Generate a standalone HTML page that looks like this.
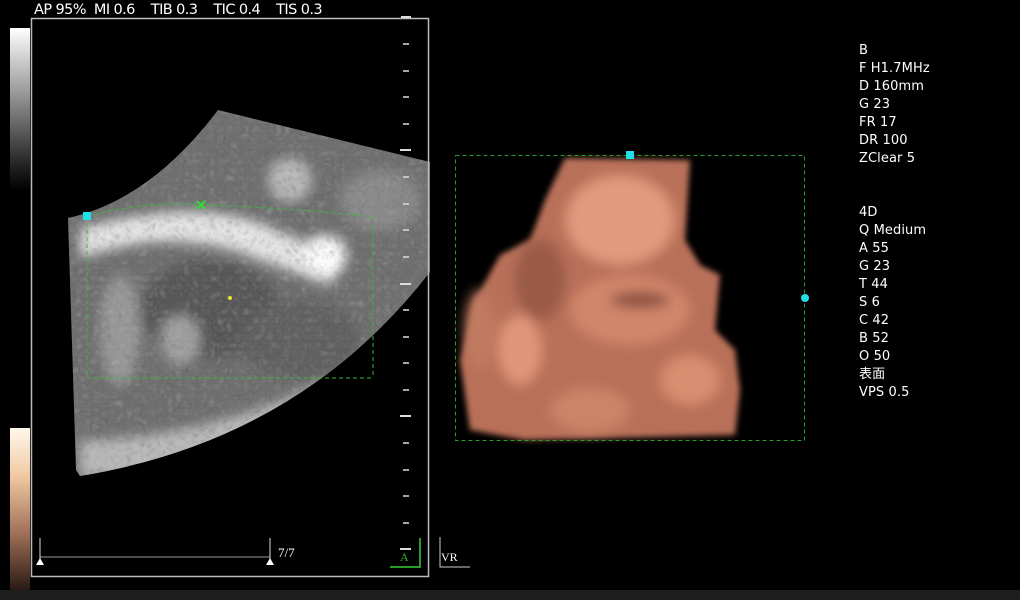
<!DOCTYPE html>
<html><head><meta charset="utf-8"><style>
html,body{margin:0;padding:0;background:#000;width:1020px;height:600px;overflow:hidden;position:relative;font-family:"Liberation Sans","Noto Sans CJK SC",sans-serif;color:#fff}
.t{position:absolute;font-size:14px;white-space:pre}
.info{position:absolute;left:859px;top:42px;font-size:13px;line-height:18px;font-family:"DejaVu Sans","Liberation Sans","Noto Sans CJK SC",sans-serif;letter-spacing:0.1px}
</style></head><body>
<div class="t" style="left:34px;top:2px;font-size:14.5px;font-family:'DejaVu Sans',sans-serif;letter-spacing:-0.6px">AP 95%  MI 0.6    TIB 0.3    TIC 0.4    TIS 0.3</div>
<div style="position:absolute;left:10px;top:28px;width:20px;height:162px;background:linear-gradient(#fff,#999 40%,#222 85%,#000)"></div>
<div style="position:absolute;left:10px;top:428px;width:20px;height:162px;background:linear-gradient(#fff8ec,#f0c8a0 30%,#a07058 65%,#2a1a14)"></div>
<div style="position:absolute;left:0;top:590px;width:1020px;height:10px;background:#1e1e1e"></div>
<svg width="1020" height="600" style="position:absolute;left:0;top:0">
<defs>
<clipPath id="sec"><path d="M68 218 Q150 200 218 110 L430 162 L430 272 Q300 440 80 476 L76 470 Z"/></clipPath>
<filter id="b6"><feGaussianBlur stdDeviation="6"/></filter>
<filter id="b3"><feGaussianBlur stdDeviation="3"/></filter>
<filter id="n"><feTurbulence baseFrequency="0.12" numOctaves="2" seed="3"/><feColorMatrix type="saturate" values="0"/><feComponentTransfer><feFuncA type="table" tableValues="0 0.45"/></feComponentTransfer></filter>
</defs>
<g clip-path="url(#sec)">
<rect x="60" y="100" width="380" height="390" fill="#6e6e6e"/>
<g filter="url(#b6)">
<path d="M80 228 Q150 210 200 212 Q250 215 280 232 Q320 245 345 265 L330 285 Q280 268 240 252 Q200 240 150 242 Q110 248 80 258Z" fill="#e8e8e8"/>
<ellipse cx="290" cy="180" rx="22" ry="22" fill="#bbb"/>
<ellipse cx="325" cy="255" rx="22" ry="20" fill="#fff"/>
<ellipse cx="210" cy="310" rx="70" ry="50" fill="#555"/>
<ellipse cx="300" cy="340" rx="60" ry="40" fill="#5e5e5e"/>
<ellipse cx="120" cy="330" rx="20" ry="55" fill="#999"/>
<ellipse cx="180" cy="340" rx="20" ry="25" fill="#a0a0a0"/>
<path d="M80 440 Q200 440 330 380 L340 400 Q220 470 80 480Z" fill="#bbb"/>
<ellipse cx="380" cy="200" rx="40" ry="30" fill="#8a8a8a"/>
</g>
<rect x="60" y="100" width="380" height="390" filter="url(#n)"/>
</g>
<rect x="31.5" y="18.5" width="397" height="558" fill="none" stroke="#bbb" stroke-width="1.5"/>
<g stroke="#ddd" stroke-width="1.5">
<line x1="401" y1="17" x2="411" y2="17" stroke-width="2"/>
<line x1="403" y1="44" x2="409" y2="44"/><line x1="403" y1="71" x2="409" y2="71"/><line x1="403" y1="97" x2="409" y2="97"/><line x1="403" y1="124" x2="409" y2="124"/>
<line x1="400" y1="150" x2="411" y2="150" stroke-width="2"/>
<line x1="403" y1="177" x2="409" y2="177"/><line x1="403" y1="204" x2="409" y2="204"/><line x1="403" y1="230" x2="409" y2="230"/><line x1="403" y1="257" x2="409" y2="257"/>
<line x1="400" y1="284" x2="411" y2="284" stroke-width="2"/>
<line x1="403" y1="310" x2="409" y2="310"/><line x1="403" y1="337" x2="409" y2="337"/><line x1="403" y1="363" x2="409" y2="363"/><line x1="403" y1="390" x2="409" y2="390"/>
<line x1="400" y1="416" x2="411" y2="416" stroke-width="2"/>
<line x1="403" y1="443" x2="409" y2="443"/><line x1="403" y1="470" x2="409" y2="470"/><line x1="403" y1="496" x2="409" y2="496"/><line x1="403" y1="523" x2="409" y2="523"/>
<line x1="400" y1="549" x2="411" y2="549" stroke-width="2"/>
</g>
<g stroke="#3cb83c" stroke-width="1" fill="none" stroke-dasharray="4 3">
<path d="M88 216 Q150 200 200 205 Q300 208 373 217"/>
<line x1="87" y1="216" x2="87" y2="378"/><line x1="87" y1="378" x2="373" y2="378"/><line x1="373" y1="217" x2="373" y2="378"/>
</g>
<rect x="83" y="212" width="8" height="8" fill="#1ee0e8"/>
<path d="M197 201 L205 209 M205 201 L197 209" stroke="#2ee02e" stroke-width="2"/>
<circle cx="230" cy="298" r="2" fill="#e8e820"/>
<line x1="40" y1="557" x2="270" y2="557" stroke="#999" stroke-width="1"/>
<line x1="40" y1="538" x2="40" y2="560" stroke="#ddd"/><line x1="270" y1="538" x2="270" y2="560" stroke="#ddd"/>
<path d="M36 565 L40 558 L44 565Z M266 565 L270 558 L274 565Z" fill="#fff"/>
<text x="278" y="557" font-size="13" fill="#fff" font-family="Liberation Serif,serif">7/7</text>
<path d="M420 538 L420 567 L390 567" stroke="#2a9a2a" stroke-width="2" fill="none"/>
<text x="400" y="561" font-size="12" fill="#2db02d" font-family="Liberation Serif,serif">A</text>
<path d="M440 537 L440 567 L470 567" stroke="#ccc" stroke-width="1" fill="none"/>
<text x="441" y="561" font-size="12" fill="#fff" font-family="Liberation Serif,serif">VR</text>
<g filter="url(#b3)">
<path d="M565 158 L690 160 L685 240 L700 265 L720 275 L715 330 L735 350 L740 390 L735 435 L525 440 L470 430 L460 360 L475 300 L500 255 L530 240 L545 200 Z" fill="#b87058"/>
</g>
<g filter="url(#b6)">
<ellipse cx="620" cy="220" rx="55" ry="45" fill="#e29a7e"/>
<ellipse cx="630" cy="310" rx="60" ry="35" fill="#d0866a"/>
<ellipse cx="520" cy="350" rx="22" ry="35" fill="#e09678"/>
<ellipse cx="690" cy="380" rx="30" ry="25" fill="#d88e70"/>
<ellipse cx="590" cy="410" rx="40" ry="22" fill="#cc8468"/>
<ellipse cx="540" cy="280" rx="25" ry="40" fill="#9a5a46"/>
<ellipse cx="480" cy="330" rx="15" ry="40" fill="#c07a60"/>
<ellipse cx="640" cy="300" rx="30" ry="8" fill="#8a4e3e"/>
</g>
<g stroke="#2a9a2a" stroke-width="1" fill="none" stroke-dasharray="4 3">
<rect x="455.5" y="155.5" width="349" height="285"/>
</g>
<rect x="626" y="151" width="8" height="8" fill="#1ee0e8"/>
<circle cx="805" cy="298" r="4" fill="#1ee0e8"/>
</svg>
<div class="info">B<br>F H1.7MHz<br>D 160mm<br>G 23<br>FR 17<br>DR 100<br>ZClear 5<br><br><br>4D<br>Q Medium<br>A 55<br>G 23<br>T 44<br>S 6<br>C 42<br>B 52<br>O 50<br>表面<br>VPS 0.5</div>
</body></html>
